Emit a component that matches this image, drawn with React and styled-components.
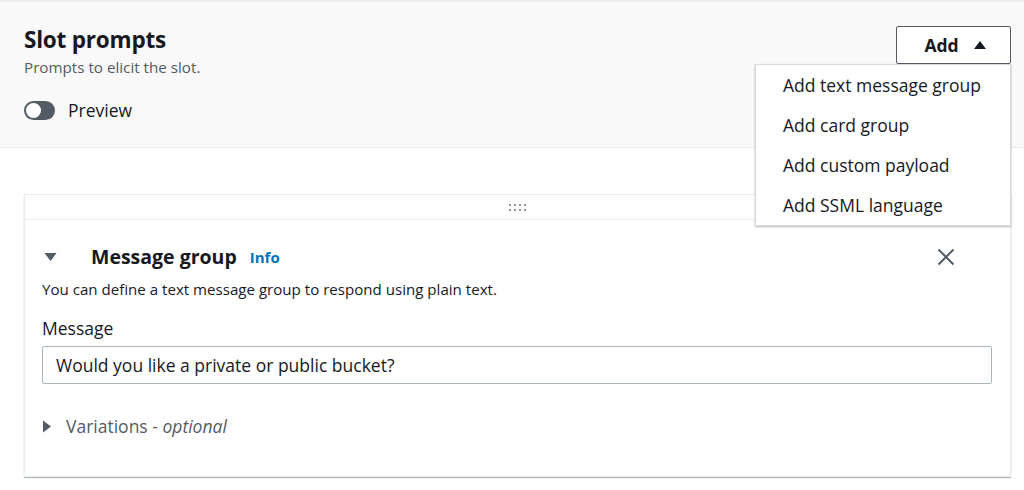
import React from 'react';
import styled, { createGlobalStyle } from 'styled-components';

const GlobalStyle = createGlobalStyle`
  html, body {
    margin: 0;
    padding: 0;
    background: #fff;
    font-family: "Open Sans", "Noto Sans", Arial, sans-serif;
    color: #16191f;
  }
  * { box-sizing: border-box; }
`;

const Page = styled.div`
  width: 1024px;
  height: 490px;
  overflow: hidden;
  background: #fff;
`;

const Header = styled.div`
  height: 148px;
  background: #f9f9f9;
  border-top: 2px solid #eeeeee;
  border-bottom: 1px solid #eaeded;
  padding: 24px 13px 0 24px;
  display: flex;
  justify-content: space-between;
  align-items: flex-start;
`;

const TitleBlock = styled.div`
  display: flex;
  flex-direction: column;
`;

const Title = styled.h2`
  margin: 0;
  font-size: 22.5px;
  line-height: 28px;
  font-weight: 700;
  letter-spacing: -0.2px;
`;

const Subtitle = styled.div`
  font-size: 15.2px;
  line-height: 20px;
  color: #545b64;
  margin-top: 3px;
`;

const ToggleRow = styled.div`
  display: flex;
  align-items: center;
  gap: 13px;
  margin-top: 21px;
  font-size: 17.5px;
`;

const Toggle = styled.span`
  width: 31px;
  height: 19px;
  border-radius: 10px;
  background: #545b64;
  display: flex;
  align-items: center;
  padding: 2px;

  &::before {
    content: '';
    width: 15px;
    height: 15px;
    border-radius: 50%;
    background: #fff;
  }
`;

const AddWrap = styled.div`
  position: relative;
`;

const AddButton = styled.button`
  width: 115px;
  height: 38px;
  background: #fff;
  border: 1px solid #545b64;
  border-radius: 2px;
  display: flex;
  align-items: center;
  justify-content: center;
  gap: 14px;
  font-family: inherit;
  font-size: 17.5px;
  font-weight: 700;
  color: #16191f;
  padding: 0 0 0 4px;
`;

const Menu = styled.ul`
  position: absolute;
  top: 38px;
  right: 0;
  width: 256px;
  margin: 0;
  padding: 0;
  list-style: none;
  background: #fff;
  border: 1px solid #d5dbdb;
  box-shadow: 0 1px 2px rgba(0, 28, 36, 0.3);
  z-index: 2;
`;

const MenuItem = styled.li`
  height: 40px;
  line-height: 40px;
  padding-left: 27px;
  font-size: 17.5px;
  color: #16191f;
  white-space: nowrap;
`;

const Content = styled.div`
  padding: 46px 13px 0 24px;
`;

const Card = styled.div`
  background: #fff;
  border: 1px solid #eaeded;
  box-shadow: 0 1px 1px rgba(0, 28, 36, 0.3);
`;

const DragBar = styled.div`
  height: 25px;
  border-bottom: 1px solid #eaeded;
  display: flex;
  align-items: center;
  justify-content: center;
`;

const Dots = styled.div`
  display: grid;
  grid-template-columns: repeat(4, 2px);
  grid-auto-rows: 2px;
  gap: 3px 3px;
`;

const Dot = styled.span`
  background: #687078;
  border-radius: 1px;
`;

const Body = styled.div`
  padding: 23px 18px 38px 17px;
`;

const GroupHeader = styled.div`
  display: flex;
  align-items: center;
  height: 28px;
`;

const Caret = styled.span`
  display: inline-flex;
  color: #545b64;
  width: ${(p) => p.$w}px;
  justify-content: center;
`;

const GroupTitle = styled.h3`
  margin: 0 0 0 33px;
  font-size: 19.5px;
  font-weight: 700;
  line-height: 28px;
`;

const InfoLink = styled.a`
  margin-left: 13px;
  font-size: 15px;
  font-weight: 700;
  color: #0073bb;
  text-decoration: none;
`;

const Close = styled.span`
  margin-left: auto;
  margin-right: 37px;
  display: inline-flex;
  color: #545b64;
`;

const Description = styled.div`
  margin-top: 8px;
  font-size: 15.1px;
  line-height: 20px;
  color: #16191f;
`;

const Label = styled.div`
  margin-top: 18px;
  font-size: 17.5px;
  line-height: 22px;
`;

const Input = styled.div`
  margin-top: 7px;
  height: 38px;
  border: 1px solid #aab7b8;
  border-radius: 2px;
  display: flex;
  align-items: center;
  padding: 0 13px;
  font-size: 17.5px;
`;

const Variations = styled.div`
  margin-top: 30px;
  display: flex;
  align-items: center;
  gap: 14px;
  font-size: 17.5px;
  color: #545b64;

  em {
    font-style: italic;
  }
`;

const menuItems = [
  'Add text message group',
  'Add card group',
  'Add custom payload',
  'Add SSML language',
];

const TriUp = () => (
  <svg width="14" height="10" viewBox="0 0 14 10">
    <path d="M7 1 L13 9 L1 9 Z" fill="#16191f" />
  </svg>
);

const TriDown = () => (
  <svg width="13" height="10" viewBox="0 0 13 10">
    <path d="M0.5 1 L12.5 1 L6.5 9 Z" fill="currentColor" />
  </svg>
);

const TriRight = () => (
  <svg width="10" height="13" viewBox="0 0 10 13">
    <path d="M1 0.5 L9 6.5 L1 12.5 Z" fill="currentColor" />
  </svg>
);

const XIcon = () => (
  <svg width="18" height="18" viewBox="0 0 18 18">
    <path d="M1.5 1.5 L16.5 16.5 M16.5 1.5 L1.5 16.5" stroke="currentColor" strokeWidth="2" fill="none" />
  </svg>
);

const App = () => (
  <Page>
    <GlobalStyle />
    <Header>
      <TitleBlock>
        <Title>Slot prompts</Title>
        <Subtitle>Prompts to elicit the slot.</Subtitle>
        <ToggleRow>
          <Toggle />
          <span>Preview</span>
        </ToggleRow>
      </TitleBlock>
      <AddWrap>
        <AddButton>
          Add <TriUp />
        </AddButton>
        <Menu>
          {menuItems.map((m) => (
            <MenuItem key={m}>{m}</MenuItem>
          ))}
        </Menu>
      </AddWrap>
    </Header>
    <Content>
      <Card>
        <DragBar>
          <Dots>
            {Array.from({ length: 8 }).map((_, i) => (
              <Dot key={i} />
            ))}
          </Dots>
        </DragBar>
        <Body>
          <GroupHeader>
            <Caret $w={16}>
              <TriDown />
            </Caret>
            <GroupTitle>Message group</GroupTitle>
            <InfoLink href="#">Info</InfoLink>
            <Close>
              <XIcon />
            </Close>
          </GroupHeader>
          <Description>You can define a text message group to respond using plain text.</Description>
          <Label>Message</Label>
          <Input>Would you like a private or public bucket?</Input>
          <Variations>
            <Caret $w={10}>
              <TriRight />
            </Caret>
            <span>
              Variations - <em>optional</em>
            </span>
          </Variations>
        </Body>
      </Card>
    </Content>
  </Page>
);

export default App;
